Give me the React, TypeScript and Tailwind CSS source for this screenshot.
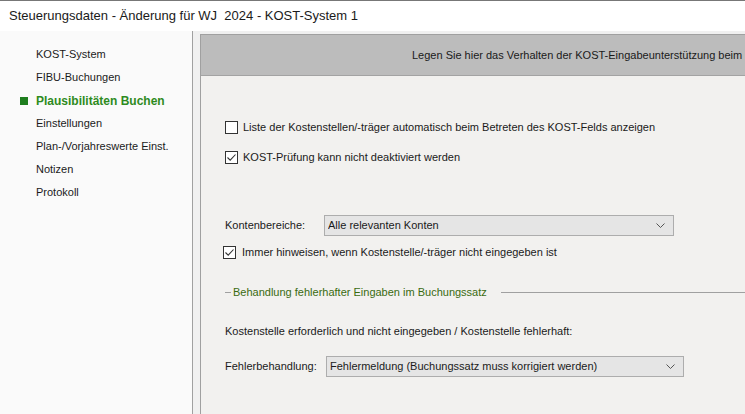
import React from 'react'

const navItems = [
  'KOST-System',
  'FIBU-Buchungen',
  'Plausibilitäten Buchen',
  'Einstellungen',
  'Plan-/Vorjahreswerte Einst.',
  'Notizen',
  'Protokoll',
]

function Check({ checked }: { checked?: boolean }) {
  return (
    <span className="w-[13px] h-[13px] border border-[#333] bg-white flex items-center justify-center shrink-0">
      {checked && (
        <svg width="11" height="11" viewBox="0 0 11 11">
          <path d="M1.5 5.5 L4.2 8.2 L9.5 2.5" fill="none" stroke="#333" strokeWidth="1.1" />
        </svg>
      )}
    </span>
  )
}

function Select({ value, width }: { value: string; width: string }) {
  return (
    <div className={`h-[21px] border border-[#adadad] bg-[#e5e5e5] flex items-center pl-[3px] pr-[8px] ${width}`}>
      <span className="flex-1 truncate">{value}</span>
      <svg width="9" height="6" viewBox="0 0 9 6">
        <path d="M0.5 0.5 L4.5 4.5 L8.5 0.5" fill="none" stroke="#555" strokeWidth="1" />
      </svg>
    </div>
  )
}

export default function App() {
  const active = 'Plausibilitäten Buchen'
  return (
    <div
      className="w-[745px] h-[414px] overflow-hidden flex flex-col text-[11px] text-[#1a1a1a] bg-white border-t border-[#777]"
      style={{ fontFamily: '"Liberation Sans", Arial, sans-serif' }}
    >
      {/* title bar */}
      <div className="h-[30px] shrink-0 flex items-center pl-[9px] text-[13px] bg-white">
        Steuerungsdaten - Änderung für WJ&nbsp; 2024 - KOST-System 1
      </div>

      <div className="flex flex-1 min-h-0">
        {/* sidebar */}
        <div className="w-[193px] shrink-0 bg-[#fafafa] border-r border-[#a0a0a0] pt-[12px]">
          {navItems.map((item) => (
            <div key={item} className="h-[23px] flex items-center relative pl-[36px]">
              {item === active && (
                <span className="absolute left-[20px] top-[8px] w-[8px] h-[8px] bg-[#1e7d1e]" />
              )}
              <span className={item === active ? 'font-bold text-[#2e8b1e] text-[12px]' : ''}>{item}</span>
            </div>
          ))}
        </div>

        {/* content */}
        <div className="flex-1 bg-[#f0f0f0] pl-[7px] pt-[3px] flex min-w-0">
          <div className="flex-1 bg-[#f2f1ef] border-l border-t border-[#a0a0a0] flex flex-col min-w-0">
            <div className="h-[41px] shrink-0 bg-[#bcbcbc] border-b border-[#a3a3a3] flex items-center pl-[211px] whitespace-nowrap overflow-hidden">
              <span>Legen Sie hier das Verhalten der KOST-Eingabeunterstützung beim Buchen fest</span>
            </div>

            <div className="pl-[24px] pt-[43px] flex flex-col">
              <label className="flex items-center gap-[5px] h-[16px]">
                <Check />
                <span>Liste der Kostenstellen/-träger automatisch beim Betreten des KOST-Felds anzeigen</span>
              </label>
              <label className="flex items-center gap-[5px] h-[16px] mt-[14px]">
                <Check checked />
                <span>KOST-Prüfung kann nicht deaktiviert werden</span>
              </label>

              <div className="flex items-center mt-[50px]">
                <span className="w-[99px]">Kontenbereiche:</span>
                <Select value="Alle relevanten Konten" width="w-[350px]" />
              </div>
              <label className="flex items-center gap-[6px] h-[16px] mt-[8px] -ml-[2px]">
                <Check checked />
                <span>Immer hinweisen, wenn Kostenstelle/-träger nicht eingegeben ist</span>
              </label>

              <div className="flex items-center mt-[24px] gap-[2px]">
                <span className="w-[6px] border-t border-[#a0a0a0]" />
                <span className="text-[#3a6b10]">Behandlung fehlerhafter Eingaben im Buchungssatz</span>
                <span className="flex-1 border-t border-[#a0a0a0] ml-[12px]" />
              </div>

              <div className="mt-[22px]">Kostenstelle erforderlich und nicht eingegeben / Kostenstelle fehlerhaft:</div>

              <div className="flex items-center mt-[17px]">
                <span className="w-[101px]">Fehlerbehandlung:</span>
                <Select value="Fehlermeldung (Buchungssatz muss korrigiert werden)" width="w-[358px]" />
              </div>
            </div>
          </div>
        </div>
      </div>
    </div>
  )
}
